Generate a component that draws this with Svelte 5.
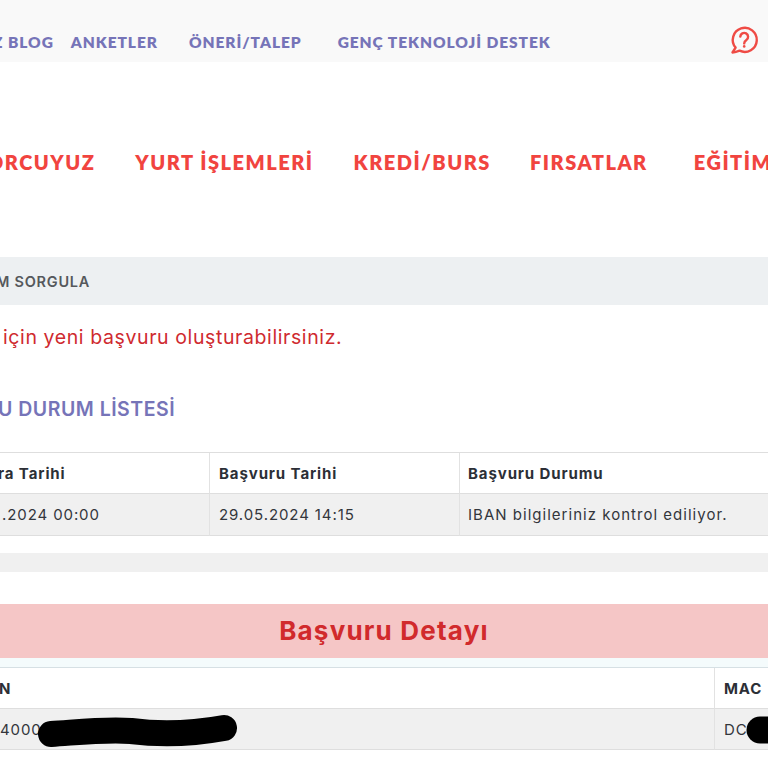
<script>
	let topLinks = ['ANKETLER', 'ÖNERİ/TALEP', 'GENÇ TEKNOLOJİ DESTEK'];
	let mainLinks = ['YURT İŞLEMLERİ', 'KREDİ/BURS', 'FIRSATLAR', 'EĞİTİM'];
</script>

<div class="page">
	<header class="topbar">
		<nav class="top-links">
			<a class="first" href="#top">Z BLOG</a>
			{#each topLinks as link}
				<a href="#top">{link}</a>
			{/each}
		</nav>
		<svg class="help" width="30" height="30" viewBox="0 0 30 30" fill="none" stroke="#ef4b45" stroke-width="2.4">
			<path d="M3.5 27.5 6.6 22.6A12 12 0 1 1 10.6 25.7C8.4 26.6 6 27.3 3.5 27.5Z" stroke-linejoin="round" />
			<path d="M11.3 11.6A3.9 3.9 0 1 1 17.4 15C15.9 16 15.2 16.8 15.2 18.4" stroke-linecap="round" />
			<circle cx="15.2" cy="21.4" r="1.3" fill="#ef4b45" stroke="none" />
		</svg>
	</header>

	<nav class="main-links">
		<a class="first" href="#top">ORCUYUZ</a>
		{#each mainLinks as link}
			<a href="#top">{link}</a>
		{/each}
	</nav>

	<div class="crumb"><span>M SORGULA</span></div>
	<p class="notice">için yeni başvuru oluşturabilirsiniz.</p>
	<h2 class="list-title">U DURUM LİSTESİ</h2>

	<div class="table status">
		<div class="cell head first-col">ra Tarihi</div>
		<div class="cell head">Başvuru Tarihi</div>
		<div class="cell head last-col">Başvuru Durumu</div>
		<div class="cell first-col">.2024 00:00</div>
		<div class="cell">29.05.2024 14:15</div>
		<div class="cell last-col wide">IBAN bilgileriniz kontrol ediliyor.</div>
	</div>

	<div class="band"></div>

	<h3 class="detail-title">Başvuru Detayı</h3>
	<div class="pale"></div>

	<div class="table detail">
		<div class="cell head first-col">N</div>
		<div class="cell head last-col">MAC</div>
		<div class="cell first-col">
			4000
			<svg class="blob" width="204" height="36" viewBox="0 0 204 36">
				<path d="M15 21C45 19 70 16 95 18 125 22 155 21 188 15" stroke="#000" stroke-width="26" stroke-linecap="round" fill="none" />
			</svg>
		</div>
		<div class="cell last-col">
			DC
			<svg class="blob mac" width="30" height="36" viewBox="0 0 30 36">
				<path d="M14 18H40" stroke="#000" stroke-width="27" stroke-linecap="round" fill="none" />
			</svg>
		</div>
	</div>
</div>

<style>
	:global(body) {
		margin: 0;
		background: #fff;
	}
	.page {
		width: 768px;
		height: 768px;
		overflow: hidden;
		display: flex;
		flex-direction: column;
		font-family: Inter, 'Open Sans', sans-serif;
		color: #33363c;
	}
	a {
		text-decoration: none;
		white-space: nowrap;
	}
	.topbar {
		height: 62px;
		flex: none;
		background: #f9f9f9;
		display: flex;
		align-items: center;
		padding-top: 22px;
		box-sizing: border-box;
	}
	.top-links {
		display: flex;
		font-family: Lato, sans-serif;
		font-size: 15.5px;
		font-weight: 800;
		letter-spacing: 0.95px;
	}
	.top-links a {
		color: #7674b8;
		margin-left: 31px;
	}
	.top-links a:nth-child(2) {
		margin-left: 17px;
	}
	.top-links a:nth-child(4) {
		margin-left: 36px;
	}
	.top-links .first {
		margin-left: -7px;
	}
	.help {
		margin-left: auto;
		margin-right: 9px;
		margin-top: -4px;
	}
	.main-links {
		height: 195px;
		flex: none;
		display: flex;
		align-items: center;
		box-sizing: border-box;
		padding-top: 4px;
		font-family: Lato, sans-serif;
		font-size: 20px;
		font-weight: 800;
		letter-spacing: 1.5px;
	}
	.main-links a {
		color: #f1443f;
		margin-left: 40px;
	}
	.main-links a:nth-child(4) {
		margin-left: 39px;
	}
	.main-links a:nth-child(5) {
		margin-left: 46px;
	}
	.main-links .first {
		margin-left: -13px;
	}
	.crumb {
		height: 48px;
		flex: none;
		background: #edf0f2;
		display: flex;
		align-items: center;
		font-size: 14.5px;
		font-weight: 600;
		letter-spacing: 0.75px;
		color: #55585c;
	}
	.crumb span {
		margin-left: -4px;
	}
	.notice {
		margin: 20px 0 0 3px;
		height: 24px;
		flex: none;
		line-height: 24px;
		font-size: 19.5px;
		letter-spacing: 0.6px;
		color: #cf2a2f;
	}
	.list-title {
		margin: 45px 0 0 -2px;
		height: 30px;
		flex: none;
		line-height: 30px;
		font-size: 19.5px;
		font-weight: 600;
		letter-spacing: 0.5px;
		color: #7674b8;
	}
	.table {
		display: grid;
		flex: none;
		border-top: 1px solid #dedede;
		font-size: 15px;
		letter-spacing: 0.9px;
	}
	.status {
		margin-top: 28px;
		grid-template-columns: 210px 250px 1fr;
	}
	.detail {
		grid-template-columns: 715px 1fr;
		border-top-color: #d6e0e4;
	}
	.cell {
		position: relative;
		height: 41px;
		box-sizing: border-box;
		display: flex;
		align-items: center;
		padding-left: 9px;
		border-right: 1px solid #e2e2e2;
		border-bottom: 1px solid #dedede;
		white-space: nowrap;
		background: #f0f0f0;
	}
	.last-col {
		border-right: 0;
	}
	.status .last-col {
		padding-left: 8px;
	}
	.wide {
		letter-spacing: 1.02px;
	}
	.status .cell:not(.head) {
		height: 42px;
	}
	.head {
		background: #fff;
		font-weight: 700;
		color: #2c2f36;
	}
	.status .first-col {
		padding-left: 2px;
	}
	.status .head.first-col {
		padding-left: 0;
		margin-left: -2px;
	}
	.detail .first-col {
		padding-left: 0;
	}
	.detail .head.first-col {
		margin-left: -1px;
	}
	.detail .blob {
		left: 36px;
		top: 4px;
	}
	.band {
		height: 19px;
		flex: none;
		margin-top: 17px;
		background: #f0f0f0;
	}
	.detail-title {
		margin: 32px 0 0;
		height: 54px;
		flex: none;
		line-height: 54px;
		text-align: center;
		background: #f5c6c6;
		font-size: 26px;
		font-weight: 700;
		letter-spacing: 1.2px;
		color: #d12a2c;
	}
	.pale {
		height: 9px;
		flex: none;
		background: #f4fbfc;
	}
	.blob {
		position: absolute;
	}
	.detail .blob.mac {
		left: 31px;
		top: 3px;
	}
</style>
